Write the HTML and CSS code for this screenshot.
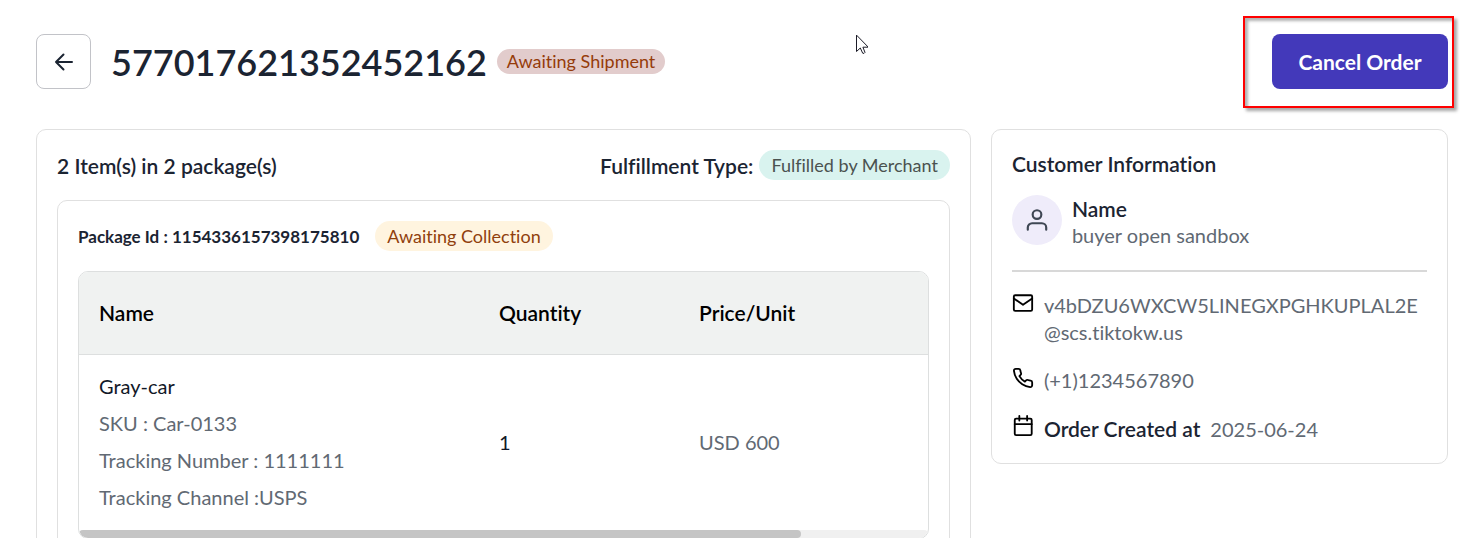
FILE: index.html
```html
<!DOCTYPE html>
<html lang="en">
<head>
    <meta charset="UTF-8">
    <meta name="viewport" content="width=device-width, initial-scale=1.0">
    <title>Order details</title>
    <link rel="stylesheet" href="styles.css">
</head>
<body>
    <div class="page">
        <header class="order-header">
            <button type="button" class="back-btn" aria-label="Back">
                <svg class="icon-arrow" viewBox="0 0 24 24"><path d="M20 12H4M11.500 4.500 4 12l7.500 7.500"/></svg>
            </button>
            <h1>577017621352452162</h1>
            <span class="badge badge-shipment">Awaiting Shipment</span>
            <div class="header-action">
                <button type="button" class="cancel-btn">Cancel Order</button>
                <span class="highlight"></span>
            </div>
        </header>

        <main class="order-body">
            <section class="card">
                <div class="card-head">
                    <h2>2 Item(s) in 2 package(s)</h2>
                    <div class="fulfillment">
                        <h2>Fulfillment Type:</h2>
                        <span class="badge badge-merchant">Fulfilled by Merchant</span>
                    </div>
                </div>
                <div class="card package">
                    <div class="package-head">
                        <h3>Package Id : 1154336157398175810</h3>
                        <span class="badge badge-collection">Awaiting Collection</span>
                    </div>
                    <div class="table-box">
                        <div class="table-scroll">
                            <table>
                                <thead>
                                    <tr>
                                        <th class="col-name">Name</th>
                                        <th>Quantity</th>
                                        <th>Price/Unit</th>
                                        <th></th>
                                    </tr>
                                </thead>
                                <tbody>
                                    <tr>
                                        <td>
                                            <div class="item">
                                                <p class="dark">Gray-car</p>
                                                <p>SKU : Car-0133</p>
                                                <p>Tracking Number : 1111111</p>
                                                <p>Tracking Channel :USPS</p>
                                            </div>
                                        </td>
                                        <td class="dark">1</td>
                                        <td>USD 600</td>
                                        <td></td>
                                    </tr>
                                </tbody>
                            </table>
                        </div>
                        <div class="scroll-track"><div class="scroll-thumb"></div></div>
                    </div>
                </div>
            </section>

            <aside class="card customer">
                <h2>Customer Information</h2>
                <div class="person">
                    <span class="avatar">
                        <svg class="icon-user" viewBox="0 0 24 24"><circle cx="12" cy="7" r="4"/><path d="M3.500 21v-2a4 4 0 0 1 4-4h9a4 4 0 0 1 4 4v2"/></svg>
                    </span>
                    <div>
                        <p class="label">Name</p>
                        <p>buyer open sandbox</p>
                    </div>
                </div>
                <hr>
                <ul class="contact">
                    <li>
                        <svg class="icon" viewBox="0 0 24 24"><rect x="2" y="3.500" width="20" height="17" rx="1.500"/><path d="m2 7 10 7 10-7"/></svg>
                        <span>v4bDZU6WXCW5LINEGXPGHKUPLAL2E<wbr>@scs.tiktokw.us</span>
                    </li>
                    <li>
                        <svg class="icon" viewBox="0 0 24 24"><path d="M22 16.920v3a2 2 0 0 1-2.180 2 19.790 19.790 0 0 1-8.630-3.070 19.500 19.500 0 0 1-6-6 19.790 19.790 0 0 1-3.070-8.670A2 2 0 0 1 4.110 2h3a2 2 0 0 1 2 1.720 12.840 12.840 0 0 0 .7 2.810 2 2 0 0 1-.45 2.110L8.090 9.910a16 16 0 0 0 6 6l1.270-1.270a2 2 0 0 1 2.110-.45 12.840 12.840 0 0 0 2.810.7A2 2 0 0 1 22 16.920z"/></svg>
                        <span>(+1)1234567890</span>
                    </li>
                    <li>
                        <svg class="icon" viewBox="0 0 24 24"><rect x="3" y="4" width="18.500" height="18" rx="1.500"/><path d="M3 10h18.500M8 1v5M16.500 1v5"/></svg>
                        <span><span class="label">Order Created at</span>2025-06-24</span>
                    </li>
                </ul>
            </aside>
        </main>

        <svg class="pointer" viewBox="0 0 12 20"><path d="M.5.500v16l3.800-3.500 2.400 5.200q1.500.8 2.300-.8L6.900 12.200h5z"/></svg>
    </div>
</body>
</html>
```

FILE: styles.css
```css
* {
    padding: 0;
    margin: 0;
    box-sizing: border-box;
}
body {
    font-family: Lato, "Open Sans", sans-serif;
    font-size: 20px;
    line-height: 27px;
    font-variant-ligatures: none;
    color: #616973;
    background-color: #fff;
    overflow-x: hidden;
}
.page {
    position: relative;
    padding: 34px 12px 20px 36px;
}
h1, h2, h3, .label {
    color: #1b2432;
}
h1 {
    font-size: 36px;
    line-height: 48px;
    font-weight: 600;
    margin: 0 10px 0 20px;
}
h2 {
    font-size: 21px;
    font-weight: 600;
}
h3 {
    font-size: 17px;
    font-weight: 700;
}
svg {
    fill: none;
    stroke: currentColor;
    stroke-width: 2;
    stroke-linecap: round;
    stroke-linejoin: round;
}
.dark {
    color: #111827;
}

/* header */
.order-header {
    display: flex;
    align-items: center;
    margin-bottom: 40px;
}
.back-btn {
    display: flex;
    align-items: center;
    justify-content: center;
    width: 55px;
    height: 55px;
    color: #1b2432;
    background-color: #fff;
    border: 1px solid #c2c3c8;
    border-radius: 8px;
    cursor: pointer;
}
.icon-arrow {
    width: 24px;
    height: 24px;
}
.header-action {
    position: relative;
    margin-left: auto;
}
.cancel-btn {
    width: 176px;
    height: 55px;
    font-family: inherit;
    font-size: 21px;
    font-weight: 700;
    color: #fff;
    background-color: #4339ba;
    border: none;
    border-radius: 8px;
    cursor: pointer;
    display: block;
}
.highlight {
    position: absolute;
    inset: -18px -6px -19px -29px;
    border: 2px solid #f00;
    box-shadow: 3px 3px 3px rgba(0, 0, 0, 0.35), inset 3px 3px 3px rgba(0, 0, 0, 0.3);
    pointer-events: none;
}

/* badges */
.badge {
    padding: 0 12px;
    font-size: 18px;
    line-height: 30px;
    border-radius: 15px;
    white-space: nowrap;
}
.badge-shipment {
    padding: 0 10px;
    line-height: 25px;
    color: #953b0a;
    background-color: #e2cccc;
}
.badge-merchant {
    color: #4b5250;
    background-color: #d9f3ef;
}
.badge-collection {
    color: #90400d;
    background-color: #fff4df;
}

/* cards */
.order-body {
    display: grid;
    grid-template-columns: minmax(0, 45fr) minmax(0, 22fr);
    gap: 20px;
    align-items: start;
}
.card {
    padding: 20px;
    border: 1px solid #e0e0e0;
    border-radius: 10px;
}
.card-head {
    display: flex;
    align-items: center;
    justify-content: space-between;
    margin-bottom: 20px;
}
.fulfillment {
    display: flex;
    align-items: center;
    gap: 6px;
}
.package-head {
    display: flex;
    align-items: center;
    gap: 16px;
    margin-bottom: 20px;
}

/* items table */
.table-box {
    border: 1px solid #dddfdf;
    border-radius: 10px;
    overflow: hidden;
}
.table-scroll {
    overflow-x: auto;
    scrollbar-width: none;
}
table {
    width: 1000px;
    table-layout: fixed;
    border-collapse: collapse;
}
th, td {
    padding: 18px 20px;
    text-align: left;
}
th {
    height: 82px;
    font-size: 21px;
    font-weight: 600;
    color: #000;
    background-color: #f0f2f1;
    border-bottom: 1px solid #dddfdf;
}
td {
    height: 176px;
}
.col-name {
    width: 400px;
}
.item {
    display: flex;
    flex-direction: column;
    gap: 10px;
}
.scroll-track {
    height: 8px;
    background-color: #f0f0f0;
    border-radius: 4px;
}
.scroll-thumb {
    width: 85%;
    height: 8px;
    background-color: #c5c5c5;
    border-radius: 4px;
}

/* customer */
.person {
    display: flex;
    gap: 10px;
    margin-top: 18px;
}
.avatar {
    display: flex;
    align-items: center;
    justify-content: center;
    width: 50px;
    height: 50px;
    color: #3f4754;
    background-color: #efecfa;
    border-radius: 50%;
}
.icon-user {
    width: 26px;
    height: 26px;
}
.label {
    font-size: 21px;
    font-weight: 600;
}
hr {
    margin: 21px 0 20px;
    border: none;
    border-top: 2px solid #d8d8d8;
}
.contact {
    display: flex;
    flex-direction: column;
    gap: 21px;
    list-style: none;
}
.contact li {
    display: flex;
    gap: 10px;
}
.contact .label {
    margin-right: 10px;
}
.icon {
    flex-shrink: 0;
    width: 22px;
    height: 22px;
    color: #000;
}

.pointer {
    position: absolute;
    left: 856px;
    top: 35px;
    width: 12px;
    height: 20px;
    fill: #fff;
    stroke: #1c1c28;
    stroke-width: 1;
}
```
